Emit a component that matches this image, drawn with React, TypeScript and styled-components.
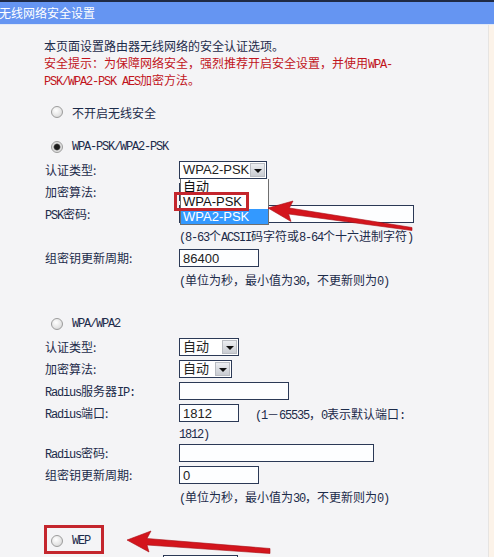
import React from "react";
import styled, { createGlobalStyle } from "styled-components";

const GlobalStyle = createGlobalStyle`
  html, body {
    margin: 0;
    padding: 0;
    overflow: hidden;
    background: #f4f4f6;
  }
  body {
    font-family: "Noto Sans CJK SC", sans-serif;
    font-size: 12px;
    color: #1c2b4a;
  }
`;

const Page = styled.div`
  position: relative;
  width: 494px;
  height: 557px;
  overflow: hidden;
  background: #f4f4f6;
`;

const TitleBar = styled.div`
  height: 22px;
  border-top: 2px solid #1f2a44;
  border-bottom: 1px solid #e2e9f6;
  background: #6595f2;
  color: #fff;
  font-size: 12px;
  line-height: 22px;
  margin-left: -1px;
  white-space: nowrap;
`;

const Body = styled.div`
  display: flex;
`;

const Main = styled.div`
  flex: 1;
  padding: 12px 0 0 44px;
  white-space: nowrap;
`;

const Edge = styled.div`
  width: 5px;
  border-left: 1px solid #e6e4e2;
  background: #fcf3e9;
`;

// SimSun-style half-width latin run, kept from stretching the line box
const Lat = styled.span`
  font-family: "Liberation Mono", "DejaVu Sans Mono", monospace;
  font-size: 12px;
  letter-spacing: -1.2px;
  line-height: 1;
`;

const Intro = styled.div`
  line-height: 17px;
`;

const Warn = styled.div`
  color: #c1141c;
`;

const Option = styled.div`
  position: relative;
  display: flex;
  align-items: center;
  gap: 9px;
  height: 22px;
  margin-top: 13px;
  padding-left: 7px;
`;

const Radio = styled.span<{ $on?: boolean }>`
  box-sizing: border-box;
  width: 12px;
  height: 12px;
  border-radius: 50%;
  border: 1px solid #9c9c9c;
  background: ${(p) =>
    p.$on
      ? "radial-gradient(circle, #1b1b1b 0 2.4px, #5c5c5c 3px, #d8d8d8 3.8px, #f6f6f6 100%)"
      : "radial-gradient(circle at 40% 35%, #ffffff, #e4e4e4 60%, #cbcbcb)"};
`;

const Fields = styled.div`
  margin-top: 1px;
  padding-bottom: 9px;
`;

const Row = styled.div<{ $label?: number; $top?: boolean }>`
  display: grid;
  grid-template-columns: ${(p) => p.$label ?? 135}px auto;
  align-items: ${(p) => (p.$top ? "start" : "center")};
  height: ${(p) => (p.$top ? "auto" : "22px")};
`;

const Label = styled.div`
  padding-left: 1px;
  line-height: 22px;
`;

const Hint = styled.div`
  line-height: 22px;
`;

const PortCell = styled.div`
  padding-top: 2px;
  line-height: 19px;
`;

const PortHint = styled.span`
  margin-left: 16px;
`;

const Input = styled.input<{ $w: number }>`
  box-sizing: border-box;
  width: ${(p) => p.$w}px;
  height: 18px;
  margin: 0;
  padding: 0 3px;
  border: 1px solid #2b3956;
  border-radius: 0;
  background: #fdfeff;
  font-family: "Liberation Sans", Arial, sans-serif;
  font-size: 13px;
  color: #222;
  outline: none;
  vertical-align: top;
`;

const Select = styled.div<{ $w: number }>`
  position: relative;
  box-sizing: border-box;
  width: ${(p) => p.$w}px;
  height: 18px;
  border: 1px solid #2b3956;
  background: #fff;
  display: flex;
  align-items: center;
  justify-content: space-between;
  font-family: "Liberation Sans", Arial, "Noto Sans CJK SC", sans-serif;
  font-size: 13px;
  color: #222;
`;

const SelectText = styled.span`
  padding-left: 3px;
  line-height: 16px;
`;

const DropButton = styled.span`
  box-sizing: border-box;
  width: 15px;
  height: 14px;
  margin-right: 1px;
  border: 1px solid #b9bcc2;
  background: linear-gradient(#eceef1, #c9ccd2);
  display: flex;
  align-items: center;
  justify-content: center;

  &::after {
    content: "";
    border-left: 4px solid transparent;
    border-right: 4px solid transparent;
    border-top: 4px solid #111;
    margin-top: 1px;
  }
`;

const Menu = styled.div`
  position: absolute;
  top: 17px;
  left: 0;
  width: 87px;
  background: #fff;
  border: 1px solid #6f6f6f;
  border-top: none;
  z-index: 2;
`;

const MenuItem = styled.div<{ $active?: boolean }>`
  height: 15px;
  line-height: 15px;
  padding-left: 2px;
  background: ${(p) => (p.$active ? "#3399ff" : "transparent")};
  color: ${(p) => (p.$active ? "#fff" : "#111")};
`;

const Mark = styled.div<{ $x: number; $y: number; $w: number; $h: number }>`
  position: absolute;
  left: ${(p) => p.$x}px;
  top: ${(p) => p.$y}px;
  width: ${(p) => p.$w}px;
  height: ${(p) => p.$h}px;
  box-sizing: border-box;
  border: 3px solid #c4262d;
  z-index: 3;
  pointer-events: none;
`;

const Arrows = styled.svg`
  position: absolute;
  left: 0;
  top: 0;
  z-index: 4;
  pointer-events: none;
`;

const Drop = ({ w, text }: { w: number; text?: string }) => (
  <Select $w={w}>
    <SelectText>{text}</SelectText>
    <DropButton />
  </Select>
);

const Period = () => (
  <Hint>
    <Lat>(</Lat>单位为秒，最小值为<Lat>30</Lat>，不更新则为<Lat>0)</Lat>
  </Hint>
);

export default function App() {
  return (
    <Page>
      <GlobalStyle />
      <TitleBar>无线网络安全设置</TitleBar>
      <Body>
        <Main>
          <Intro>
            <div>本页面设置路由器无线网络的安全认证选项。</div>
            <Warn>
              安全提示：为保障网络安全，强烈推荐开启安全设置，并使用<Lat>WPA-</Lat>
            </Warn>
            <Warn>
              <Lat>PSK/WPA2-PSK AES</Lat>加密方法。
            </Warn>
          </Intro>

          <Option>
            <Radio />
            <span>不开启无线安全</span>
          </Option>

          <Option>
            <Radio $on />
            <Lat>WPA-PSK/WPA2-PSK</Lat>
          </Option>
          <Fields>
            <Row>
              <Label>认证类型:</Label>
              <Select $w={88}>
                <SelectText>WPA2-PSK</SelectText>
                <DropButton />
                <Menu>
                  <MenuItem>自动</MenuItem>
                  <MenuItem>WPA-PSK</MenuItem>
                  <MenuItem $active>WPA2-PSK</MenuItem>
                </Menu>
                <Mark $x={-6} $y={30} $w={75} $h={19} />
              </Select>
            </Row>
            <Row>
              <Label>加密算法:</Label>
              <Drop w={60} />
            </Row>
            <Row>
              <Label>
                <Lat>PSK</Lat>密码:
              </Label>
              <Input $w={235} readOnly />
            </Row>
            <Row>
              <div />
              <Hint>
                <Lat>(8-63</Lat>个<Lat>ACSII</Lat>码字符或<Lat>8-64</Lat>个十六进制字符<Lat>)</Lat>
              </Hint>
            </Row>
            <Row>
              <Label>组密钥更新周期:</Label>
              <Input $w={80} defaultValue="86400" readOnly />
            </Row>
            <Row>
              <div />
              <Period />
            </Row>
          </Fields>

          <Option>
            <Radio />
            <Lat>WPA/WPA2</Lat>
          </Option>
          <Fields>
            <Row>
              <Label>认证类型:</Label>
              <Drop w={60} text="自动" />
            </Row>
            <Row>
              <Label>加密算法:</Label>
              <Drop w={53} text="自动" />
            </Row>
            <Row>
              <Label>
                <Lat>Radius</Lat>服务器<Lat>IP:</Lat>
              </Label>
              <Input $w={110} readOnly />
            </Row>
            <Row $top>
              <Label>
                <Lat>Radius</Lat>端口:
              </Label>
              <PortCell>
                <Input $w={60} defaultValue="1812" readOnly />
                <PortHint>
                  <Lat>(1</Lat>－<Lat>65535</Lat>，<Lat>0</Lat>表示默认端口<Lat>:</Lat>
                </PortHint>
                <br />
                <Lat>1812)</Lat>
              </PortCell>
            </Row>
            <Row>
              <Label>
                <Lat>Radius</Lat>密码:
              </Label>
              <Input $w={195} readOnly />
            </Row>
            <Row>
              <Label>组密钥更新周期:</Label>
              <Input $w={80} defaultValue="0" readOnly />
            </Row>
            <Row>
              <div />
              <Period />
            </Row>
          </Fields>

          <Option>
            <Radio />
            <Lat>WEP</Lat>
            <Mark $x={0} $y={-5} $w={60} $h={29} />
          </Option>
          <Fields>
            <Row $label={119}>
              <div />
              <Drop w={75} />
            </Row>
          </Fields>
        </Main>
        <Edge />
      </Body>

      <Arrows width="494" height="557" viewBox="0 0 494 557">
        <polygon
          points="268,208 293,201 289.4,208 412,227.5 412,230.5 288.6,214 291,221.5"
          fill="#d3151d"
          stroke="#a80f16"
          strokeWidth="0.6"
          strokeLinejoin="round"
        />
        <polygon
          points="127,540 151,531 147,538.5 270,548.5 270,553.5 147,545 149,552"
          fill="#d3151d"
          stroke="#a80f16"
          strokeWidth="0.6"
          strokeLinejoin="round"
        />
      </Arrows>
    </Page>
  );
}
